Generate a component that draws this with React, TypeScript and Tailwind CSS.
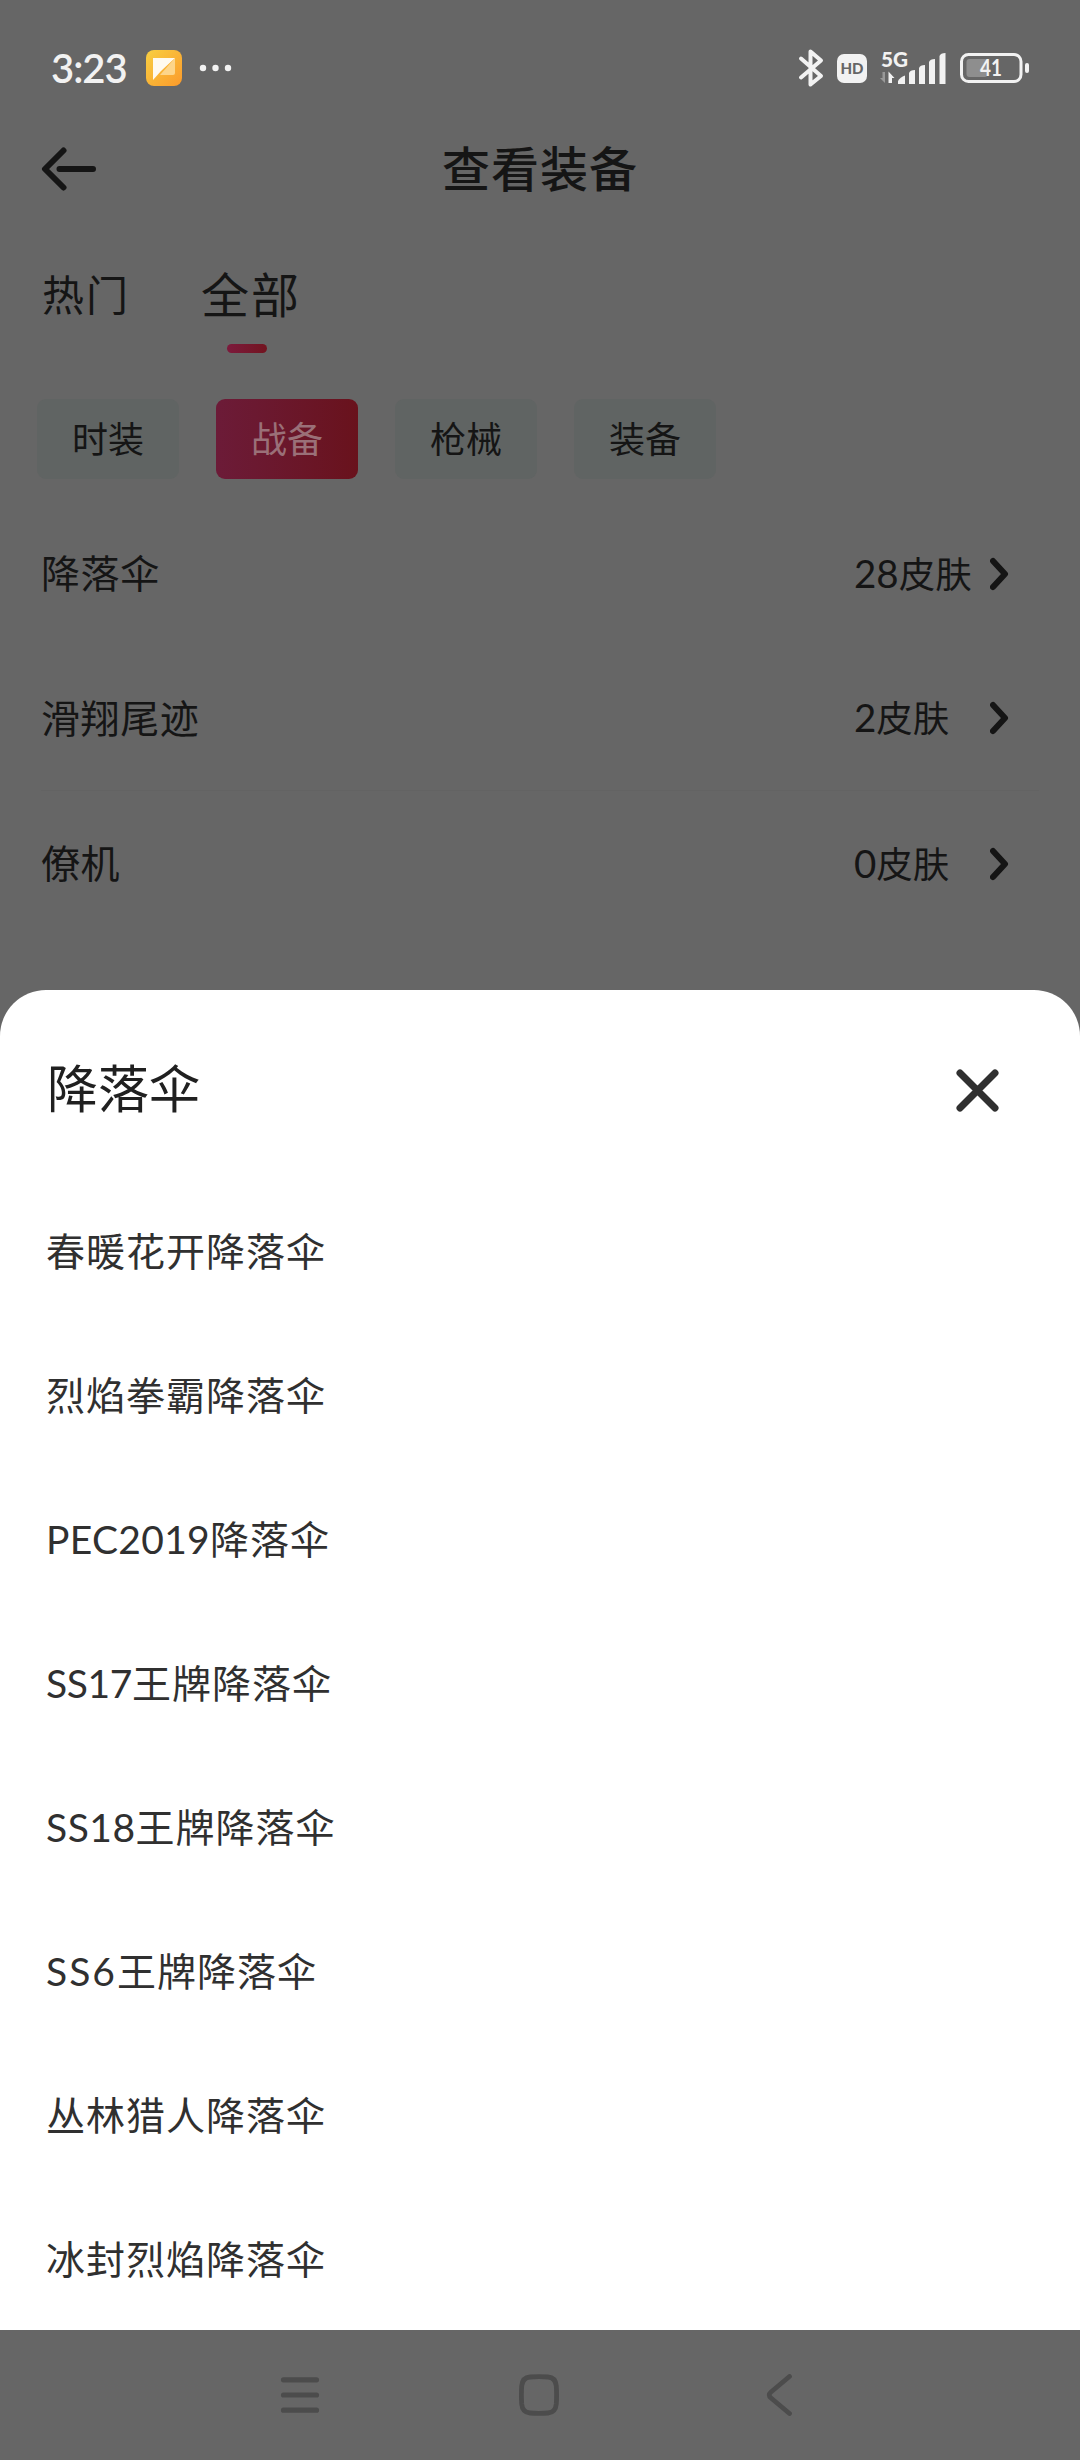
import React from 'react';
import { clsx } from 'clsx';

const tabs = ['热门', '全部'];

const chips = ['时装', '战备', '枪械', '装备'];

const categories = [
  { name: '降落伞', count: 28 },
  { name: '滑翔尾迹', count: 2 },
  { name: '僚机', count: 0 },
];

const skins = [
  { prefix: '', name: '春暖花开降落伞' },
  { prefix: '', name: '烈焰拳霸降落伞' },
  { prefix: 'PEC2019', name: '降落伞', spacing: 'tracking-[0.3px]' },
  { prefix: 'SS17', name: '王牌降落伞', spacing: 'tracking-[-0.4px]' },
  { prefix: 'SS18', name: '王牌降落伞', spacing: 'tracking-[0.5px]' },
  { prefix: 'SS6', name: '王牌降落伞', spacing: 'tracking-[2px]' },
  { prefix: '', name: '丛林猎人降落伞' },
  { prefix: '', name: '冰封烈焰降落伞' },
];

export default function App() {
  return (
    <div className="w-[1080px] h-[2460px] flex flex-col overflow-hidden bg-[#666666] text-[#151515] font-['Lato','Noto_Sans_CJK_SC',sans-serif]">
      <StatusBar />

      {/* Dimmed page */}
      <div className="h-[854px] shrink-0 flex flex-col">
        <header className="h-[66px] px-[41px] grid grid-cols-[1fr_auto_1fr] items-center">
          <BackArrow />
          <h1 className="text-[48px] leading-[66px] tracking-[1px] font-medium">查看装备</h1>
        </header>

        <nav className="mt-[60px] h-[92px] pl-[42px] flex gap-[71px]">
          {tabs.map((tab, i) => (
            <div key={tab} className="flex flex-col items-center">
              <span
                className={clsx(
                  'h-[66px] leading-[66px] font-normal',
                  i === 1 ? 'text-[48px] tracking-[2px]' : 'text-[42px] tracking-[2px]'
                )}
              >
                {tab}
              </span>
              {i === 1 && (
                <i className="mt-4 mr-[8px] w-[40px] h-[9px] rounded-full bg-linear-to-r from-[#7c1a3c] to-[#72141f]" />
              )}
            </div>
          ))}
        </nav>

        <div className="mt-[45px] pl-[37px] flex gap-[37px]">
          {chips.map((chip, i) => (
            <button
              key={chip}
              className={clsx(
                'w-[142px] h-[80px] rounded-[9px] text-[36px] leading-none',
                i === 1
                  ? 'bg-linear-to-r from-[#6c1b38] to-[#69121c] text-[#9a7078]'
                  : 'bg-[#606463]'
              )}
            >
              {chip}
            </button>
          ))}
        </div>

        <div className="mt-[22px] mx-[41px]">
          {categories.map((c, i) => (
            <div
              key={c.name}
              className={clsx('h-[145px] flex items-center', i === 1 && 'border-b border-[#636363]')}
            >
              <span className="flex-1 text-[39px] tracking-[0.6px]">{c.name}</span>
              <span className="w-[136px] text-[36.5px] whitespace-nowrap">
                <span className="text-[38.5px]">{c.count}</span>皮肤
              </span>
              <svg className="mr-[30px]" width="19" height="34" viewBox="0 0 19 34" fill="none">
                <path d="M3 4 L15 17 L3 30" stroke="#151515" strokeWidth="6" strokeLinecap="round" strokeLinejoin="round" />
              </svg>
            </div>
          ))}
        </div>
      </div>

      {/* Bottom sheet */}
      <section className="h-[1340px] shrink-0 rounded-t-[46px] bg-white text-[#303030]">
        <div className="h-[190px] pt-[2px] pl-[47px] pr-[80px] flex items-center justify-between">
          <h2 className="mt-[4px] text-[51px] leading-none text-[#202020]">降落伞</h2>
          <svg width="45" height="45" viewBox="0 0 45 45" fill="none" className="mt-[8px]">
            <path d="M5 5 L40 40 M40 5 L5 40" stroke="#303030" strokeWidth="7" strokeLinecap="round" />
          </svg>
        </div>
        <ul>
          {skins.map((s) => (
            <li key={s.prefix + s.name} className="h-[144px] pl-[46px] flex items-center text-[39px] tracking-[1px]">
              {s.prefix && <span className={clsx('mt-[-1px]', s.spacing)}>{s.prefix}</span>}
              <span className="mt-[-1px]">{s.name}</span>
            </li>
          ))}
        </ul>
      </section>

      <NavigationBar />
    </div>
  );
}

function StatusBar() {
  return (
    <div className="h-[136px] shrink-0 pl-[51px] pr-[50px] flex items-center text-[#f2f2f2]">
      <span className="w-[95px] text-[40px] tracking-[-1px] font-semibold leading-none">3:23</span>
      <svg width="36" height="36" viewBox="0 0 36 36">
        <defs>
          <linearGradient id="app" x1="0" y1="0" x2="1" y2="1">
            <stop offset="0" stopColor="#f8cf42" />
            <stop offset="1" stopColor="#fb9a2b" />
          </linearGradient>
        </defs>
        <rect width="36" height="36" rx="8" fill="url(#app)" />
        <path d="M14 25 L29 8 V23 Q29 25 27 25 Z" fill="#fdd58a" />
        <path d="M7 8 H29 L15 21 L7 30 Z" fill="#fffaf0" />
      </svg>
      <svg className="ml-[17px]" width="34" height="8" viewBox="0 0 34 8" fill="#f2f2f2">
        <circle cx="4" cy="4" r="3.2" />
        <circle cx="16.5" cy="4" r="3.2" />
        <circle cx="29" cy="4" r="3.2" />
      </svg>

      <div className="ml-auto flex items-center">
        {/* Bluetooth */}
        <svg width="26" height="40" viewBox="0 0 26 40" fill="none">
          <path
            d="M3 10.5 L23 28 L12.5 36.5 V3.5 L23 12.5 L3 29.5"
            stroke="#f2f2f2"
            strokeWidth="4"
            strokeLinecap="round"
            strokeLinejoin="round"
          />
        </svg>
        <span className="ml-[13px] w-[30px] h-[29px] rounded-[7px] bg-[#f2f2f2] text-[#666666] text-[15px] leading-[29px] font-black text-center">
          HD
        </span>
        {/* Network type and signal strength */}
        <svg className="ml-[13px] overflow-visible" width="68" height="40" viewBox="0 0 68 40" fill="#f2f2f2">
          <text x="1" y="18.5" fontSize="21" fontWeight="900" fontFamily="Lato" textLength="27" lengthAdjust="spacingAndGlyphs">5G</text>
          <path d="M5 24 V35 L0 30 H2.5 V24 Z" fill="#999999" />
          <path d="M8.5 35 V23.5 L14.5 30 H12 V35 Z" />
          <path d="M18 36 V33 Q20 29 25 27.5 V36 Z" />
          <path d="M29 36 V25 Q30 22 35 22 V36 Z" />
          <path d="M39 36 V20 Q40 17 45 17 V36 Z" />
          <path d="M49 36 V14 Q50 11 55 11 V36 Z" />
          <path d="M59.500 36 V8 Q60.500 5 65.500 5 V36 Z" />
        </svg>
        <svg className="ml-[11px]" width="71" height="32" viewBox="0 0 71 32" fill="none">
          <rect x="2.5" y="2.5" width="59.5" height="27" rx="7" stroke="#f2f2f2" strokeWidth="3" />
          <rect x="7.5" y="7" width="21" height="18" rx="3" fill="#8e8e8e" />
          <rect x="66" y="11" width="4" height="10" rx="2" fill="#f2f2f2" />
          <text
            x="21"
            y="24"
            fontSize="22.5"
            fontWeight="700"
            fontFamily="Lato"
            textLength="22"
            lengthAdjust="spacingAndGlyphs"
            fill="#f2f2f2"
          >
            41
          </text>
        </svg>
      </div>
    </div>
  );
}

function BackArrow() {
  return (
    <svg width="56" height="46" viewBox="0 0 56 46" fill="none">
      <path
        d="M22.5 4.5 L4 23 L22.5 41.5 M18.5 23 H52"
        stroke="#151515"
        strokeWidth="6"
        strokeLinecap="round"
        strokeLinejoin="round"
      />
    </svg>
  );
}

function NavigationBar() {
  return (
    <div className="h-[130px] pl-[279px] pr-[287px] flex items-center">
      <svg width="42" height="42" viewBox="0 0 42 42">
        <path d="M4.5 5.8 H37.5 M4.5 21 H37.5 M4.5 36.2 H37.5" stroke="#4c4c4c" strokeWidth="5.2" strokeLinecap="round" />
      </svg>
      <svg className="ml-[197px]" width="42" height="42" viewBox="0 0 42 42" fill="none">
        <path
          d="M12 3 Q21 2.4 30 3 Q37.5 3.5 38.3 12 Q38.9 21 38.3 30 Q37.5 38.5 30 39 Q21 39.6 12 39 Q4.5 38.500 3.700 30 Q3.1 21 3.700 12 Q4.500 3.500 12 3 Z"
          stroke="#4c4c4c"
          strokeWidth="4.8"
        />
      </svg>
      <svg className="ml-auto" width="28" height="42" viewBox="0 0 28 42" fill="none">
        <path d="M24.5 2.5 L6 18 Q2.5 21 6 24 L24.5 39.5" stroke="#4c4c4c" strokeWidth="4.8" strokeLinecap="round" />
      </svg>
    </div>
  );
}
